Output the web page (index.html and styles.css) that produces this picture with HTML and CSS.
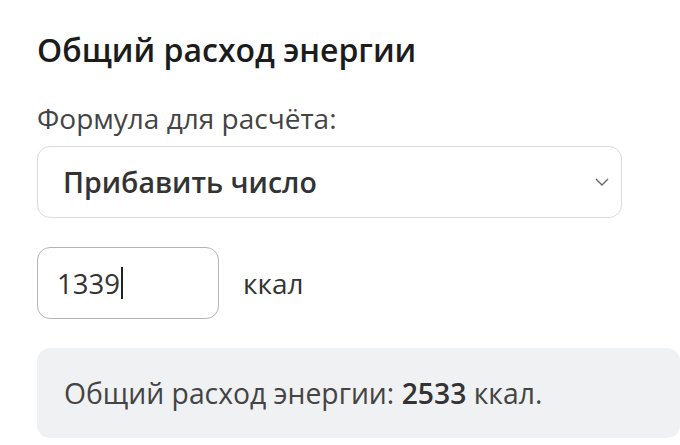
FILE: index.html
```html
<!DOCTYPE html>
<html lang="ru">
<head>
<meta charset="utf-8">
<link rel="stylesheet" href="styles.css">
</head>
<body>
<main class="page">
  <h2 class="title">Общий расход энергии</h2>
  <label class="label">Формула для расчёта:</label>
  <div class="select">
    <span class="select-value">Прибавить число</span>
    <svg class="chevron" width="14" height="8" viewBox="0 0 14 8"><path d="M1 1 L7 7 L13 1" fill="none" stroke="#666" stroke-width="1.4"/></svg>
  </div>
  <div class="input-row">
    <div class="input"><span>1339</span><span class="caret"></span></div>
    <span class="unit">ккал</span>
  </div>
  <div class="result">Общий расход энергии: <b>2533</b> ккал.</div>
</main>
</body>
</html>
```

FILE: styles.css
```css
html, body {
  margin: 0;
  padding: 0;
  background: #fff;
  overflow: hidden;
}
body {
  font-family: "Open Sans", "Noto Sans", sans-serif;
  color: #333;
}
.page {
  padding: 28px 0 0 37px;
  width: 680px;
  box-sizing: border-box;
}
.title {
  margin: 0;
  font-size: 32px;
  font-weight: 600;
  line-height: 44px;
  color: #1c1c1c;
}
.label {
  display: block;
  margin-top: 28px;
  font-size: 28px;
  line-height: 36px;
  color: #444;
}
.select {
  margin-top: 10px;
  width: 585px;
  height: 72px;
  box-sizing: border-box;
  border: 1px solid #dcdcdc;
  border-radius: 13px;
  display: flex;
  align-items: center;
  justify-content: space-between;
  padding: 0 12px 0 25px;
}
.select-value {
  font-size: 28.5px;
  font-weight: 600;
  color: #333;
}
.input-row {
  margin-top: 29px;
  display: flex;
  align-items: center;
  gap: 24px;
}
.input {
  width: 182px;
  height: 72px;
  box-sizing: border-box;
  border: 1px solid #b5b5b5;
  border-radius: 13px;
  display: flex;
  align-items: center;
  padding-left: 19px;
  font-size: 27.5px;
  color: #333;
}
.caret {
  display: inline-block;
  width: 2px;
  height: 32px;
  background: #222;
  margin-left: 1px;
}
.unit {
  font-size: 28px;
  color: #333;
}
.result {
  margin-top: 29px;
  width: 643px;
  height: 90px;
  box-sizing: border-box;
  background: #f0f1f3;
  border-radius: 13px;
  display: flex;
  align-items: center;
  padding-left: 27px;
  font-size: 28.3px;
  color: #444;
  white-space: pre;
}
.result b {
  font-weight: 600;
  color: #333;
}
```
